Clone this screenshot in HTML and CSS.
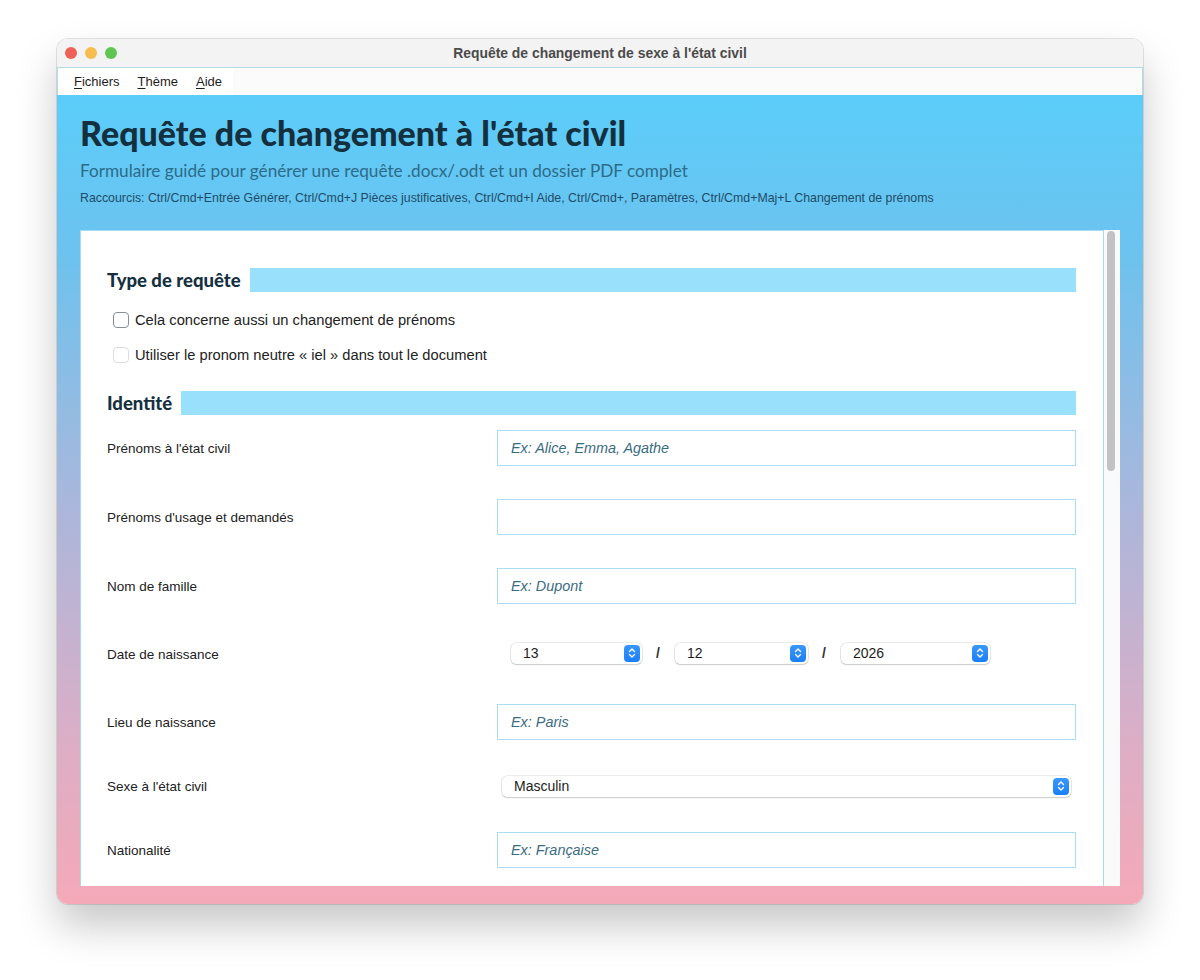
FILE: index.html
```html
<!DOCTYPE html>
<html lang="fr">
<head>
<meta charset="utf-8">
<title>Requête de changement de sexe à l'état civil</title>
<link rel="stylesheet" href="styles.css">
</head>
<body>
<div class="window">
  <div class="titlebar">
    <div class="lights">
      <span class="light red"></span>
      <span class="light yellow"></span>
      <span class="light green"></span>
    </div>
    <div class="wtitle">Requête de changement de sexe à l'état civil</div>
    <div></div>
  </div>
  <div class="menubar">
    <div class="menus">
      <span class="menu"><u>F</u>ichiers</span>
      <span class="menu"><u>T</u>hème</span>
      <span class="menu"><u>A</u>ide</span>
    </div>
  </div>
  <div class="content">
    <header class="header">
      <h1 class="h-title">Requête de changement à l'état civil</h1>
      <p class="h-sub">Formulaire guidé pour générer une requête .docx/.odt et un dossier PDF complet</p>
      <p class="h-keys">Raccourcis: Ctrl/Cmd+Entrée Générer, Ctrl/Cmd+J Pièces justificatives, Ctrl/Cmd+I Aide, Ctrl/Cmd+, Paramètres, Ctrl/Cmd+Maj+L Changement de prénoms</p>
    </header>
    <div class="card">
      <div class="scroll">
        <div class="sect">
          <span class="sect-t">Type de requête</span>
          <span class="sect-bar"></span>
        </div>
        <div class="check c1">
          <span class="box"></span>
          <span>Cela concerne aussi un changement de prénoms</span>
        </div>
        <div class="check c2">
          <span class="box dis"></span>
          <span>Utiliser le pronom neutre « iel » dans tout le document</span>
        </div>
        <div class="sect s2">
          <span class="sect-t">Identité</span>
          <span class="sect-bar"></span>
        </div>
        <div class="form">
          <div class="row">
            <span class="lbl">Prénoms à l'état civil</span>
            <div class="input ph">Ex: Alice, Emma, Agathe</div>
          </div>
          <div class="row">
            <span class="lbl">Prénoms d'usage et demandés</span>
            <div class="input"></div>
          </div>
          <div class="row">
            <span class="lbl">Nom de famille</span>
            <div class="input ph">Ex: Dupont</div>
          </div>
          <div class="row row-date">
            <span class="lbl">Date de naissance</span>
            <div class="date">
              <div class="popup w1"><span>13</span><span class="pbtn"><svg viewBox="0 0 16 16" width="16" height="16"><path d="M5.5 6.5 L8 4 L10.5 6.5 M5.5 9.5 L8 12 L10.5 9.5" fill="none" stroke="#fff" stroke-width="1.4" stroke-linecap="round" stroke-linejoin="round"/></svg></span></div>
              <span class="slash">/</span>
              <div class="popup w2"><span>12</span><span class="pbtn"><svg viewBox="0 0 16 16" width="16" height="16"><path d="M5.5 6.5 L8 4 L10.5 6.5 M5.5 9.5 L8 12 L10.5 9.5" fill="none" stroke="#fff" stroke-width="1.4" stroke-linecap="round" stroke-linejoin="round"/></svg></span></div>
              <span class="slash">/</span>
              <div class="popup w3"><span>2026</span><span class="pbtn"><svg viewBox="0 0 16 16" width="16" height="16"><path d="M5.5 6.5 L8 4 L10.5 6.5 M5.5 9.5 L8 12 L10.5 9.5" fill="none" stroke="#fff" stroke-width="1.4" stroke-linecap="round" stroke-linejoin="round"/></svg></span></div>
            </div>
          </div>
          <div class="row">
            <span class="lbl">Lieu de naissance</span>
            <div class="input ph">Ex: Paris</div>
          </div>
          <div class="row row-sex">
            <span class="lbl">Sexe à l'état civil</span>
            <div class="popup wide"><span>Masculin</span><span class="pbtn"><svg viewBox="0 0 16 16" width="16" height="16"><path d="M5.5 6.5 L8 4 L10.5 6.5 M5.5 9.5 L8 12 L10.5 9.5" fill="none" stroke="#fff" stroke-width="1.4" stroke-linecap="round" stroke-linejoin="round"/></svg></span></div>
          </div>
          <div class="row">
            <span class="lbl">Nationalité</span>
            <div class="input ph">Ex: Française</div>
          </div>
        </div>
      </div>
      <div class="sbar"><div class="thumb"></div></div>
    </div>
  </div>
</div>
</body>
</html>
```
FILE: styles.css
```css
html, body {
  margin: 0;
  padding: 0;
  background: #ffffff;
}
body {
  padding: 39px 57px 0 57px;
  font-family: "Liberation Sans", Arial, sans-serif;
  height: 980px;
  box-sizing: border-box;
  overflow: hidden;
}
.window {
  width: 1086px;
  height: 865px;
  border-radius: 11px;
  overflow: hidden;
  box-shadow: 0 0 0 1px rgba(0,0,0,0.10), 0 22px 40px rgba(0,0,0,0.22);
  display: flex;
  flex-direction: column;
}
.titlebar {
  height: 28px;
  flex: none;
  background: #f3f3f3;
  border-bottom: 1px solid #b2dbe8;
  display: grid;
  grid-template-columns: 1fr auto 1fr;
  align-items: center;
}
.lights {
  display: flex;
  gap: 8px;
  padding-left: 8px;
}
.light {
  width: 12px;
  height: 12px;
  border-radius: 50%;
  display: block;
}
.red { background: #ee6158; }
.yellow { background: #f5be4f; }
.green { background: #61c554; }
.wtitle {
  font-size: 13.9px;
  font-weight: bold;
  color: #4b4b4b;
  padding-bottom: 1px;
}
.menubar {
  height: 27px;
  flex: none;
  background: #fbfbfb;
  border-left: 1px solid #b2dbe8;
  border-right: 1px solid #b2dbe8;
  display: flex;
}
.menus {
  display: flex;
  align-items: center;
  background: #ffffff;
  padding: 0 2px 0 7px;
}
.menu {
  font-size: 13px;
  color: #1e1e1e;
  padding: 0 9px;
}
.menu u {
  text-underline-offset: 2px;
}
.content {
  flex: 1;
  background: linear-gradient(180deg, #5bcdfa 0%, #6dc2ee 20%, #a9b7dc 50%, #dcaec6 80%, #f5a9b8 100%);
  padding: 0 23px;
  display: flex;
  flex-direction: column;
  min-height: 0;
}
.header {
  padding-top: 17px;
  flex: none;
}
.h-title {
  margin: 0;
  font-family: Lato, sans-serif;
  font-weight: 900;
  font-size: 34px;
  line-height: 41px;
  color: #142f3e;
}
.h-sub {
  margin: 7px 0 0 0;
  font-family: Lato, sans-serif;
  font-size: 17.2px;
  line-height: 22px;
  color: #2c6b88;
}
.h-keys {
  margin: 8px 0 0 0;
  font-size: 12.35px;
  line-height: 16px;
  color: #1e4b67;
}
.card {
  margin-top: 24px;
  height: 656px;
  flex: none;
  display: flex;
}
.scroll {
  flex: 1;
  background: #ffffff;
  border: 1px solid #a6dcef;
  border-bottom: none;
  overflow: hidden;
  padding: 37px 27px 0 26px;
}
.sbar {
  width: 16px;
  background: #fafafa;
  padding: 1px 0 0 3px;
  box-sizing: border-box;
}
.thumb {
  width: 8px;
  height: 240px;
  border-radius: 4px;
  background: #c2c2c2;
}
.sect {
  display: flex;
  align-items: center;
  gap: 9px;
}
.s2 { margin-top: 26px; }
.sect-t {
  font-family: Lato, sans-serif;
  font-weight: 900;
  font-size: 18.5px;
  line-height: 24px;
  color: #15303f;
}
.sect-bar {
  flex: 1;
  height: 24px;
  background: #98e0fb;
}
.check {
  display: flex;
  align-items: center;
  gap: 6px;
  height: 20px;
  padding-left: 6px;
  font-size: 14.7px;
  color: #222222;
}
.c1 { margin-top: 18px; }
.c2 { margin-top: 15px; }
.box {
  width: 16px;
  height: 16px;
  box-sizing: border-box;
  border: 1.5px solid #878d97;
  border-radius: 4px;
  background: #ffffff;
}
.box.dis {
  border: 1px solid #dcdcdc;
}
.form {
  margin-top: 15px;
  display: flex;
  flex-direction: column;
  gap: 33px;
}
.row {
  display: grid;
  grid-template-columns: 390px 1fr;
  align-items: center;
  min-height: 36px;
}
.row-date { min-height: 34px; }
.row-sex { min-height: 26px; }
.lbl {
  font-size: 13.5px;
  color: #222222;
}
.input {
  height: 36px;
  box-sizing: border-box;
  border: 1px solid #a9def2;
  background: #ffffff;
  padding-left: 13px;
  display: flex;
  align-items: center;
  font-size: 14.4px;
}
.ph {
  font-style: italic;
  color: #3a6c82;
}
.date {
  display: flex;
  align-items: center;
  padding-left: 14px;
  margin-top: -2px;
}
.slash {
  font-size: 14px;
  font-weight: bold;
  color: #333;
  width: 5px;
  margin: 0 14px;
}
.popup {
  height: 21px;
  box-sizing: border-box;
  background: #ffffff;
  border-radius: 5px;
  box-shadow: 0 0 0 0.5px rgba(0,0,0,0.16), 0 1px 1.5px rgba(0,0,0,0.14);
  display: flex;
  align-items: center;
  justify-content: space-between;
  padding: 0 2px 0 12px;
  font-size: 14px;
  color: #1d1d1d;
}
.w1 { width: 131px; }
.w2 { width: 133px; }
.w3 { width: 149px; }
.wide { margin: 0 5px; }
.pbtn {
  width: 16px;
  height: 17px;
  border-radius: 4px;
  background: linear-gradient(180deg, #3a97fb, #1a7ff7);
  display: flex;
  align-items: center;
  justify-content: center;
}
.pbtn svg { display: block; }
```
